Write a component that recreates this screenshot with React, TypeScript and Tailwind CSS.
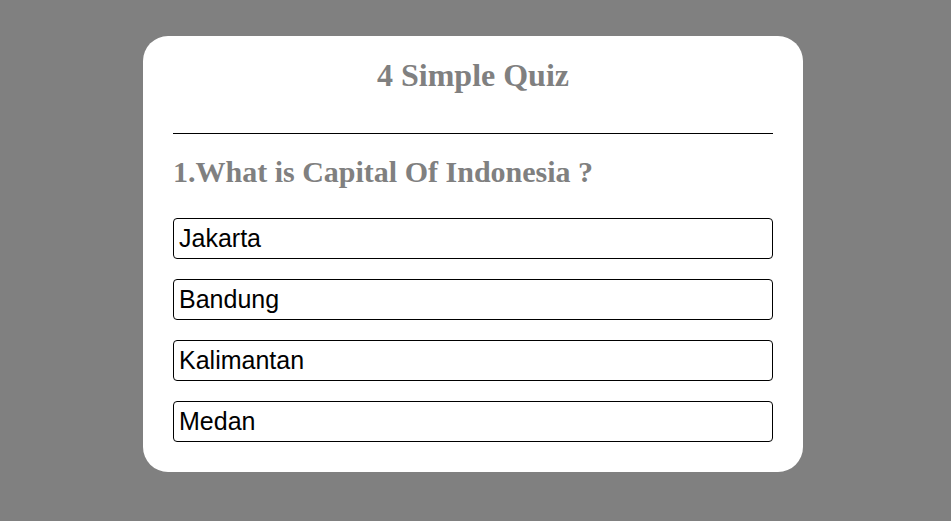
const options = ['Jakarta', 'Bandung', 'Kalimantan', 'Medan']

export default function App() {
  return (
    <div className="min-h-[521px] w-full bg-[#808080] pt-[36px] pb-[50px]">
      <div className="ml-[143px] w-[660px] rounded-[25px] bg-white px-[30px] pt-[21px] pb-[30px]">
        <h1
          className="text-center text-[32px] leading-[37px] font-bold text-[#808080]"
          style={{ fontFamily: '"Liberation Serif", serif' }}
        >
          4 Simple Quiz
        </h1>
        <hr className="mt-[39px] border-0 border-t border-black" />
        <h2
          className="mt-[21px] text-[30px] leading-[34px] font-bold text-[#808080]"
          style={{ fontFamily: '"Liberation Serif", serif' }}
        >
          1.What is Capital Of Indonesia ?
        </h2>
        <div className="mt-[29px] flex flex-col gap-[20px]">
          {options.map((o) => (
            <button
              key={o}
              className="flex h-[41px] w-full items-center rounded-[4px] border border-black bg-white px-[5px] text-left text-[25px] text-black"
              style={{ fontFamily: '"Liberation Sans", Arial, sans-serif' }}
            >
              {o}
            </button>
          ))}
        </div>
      </div>
    </div>
  )
}
